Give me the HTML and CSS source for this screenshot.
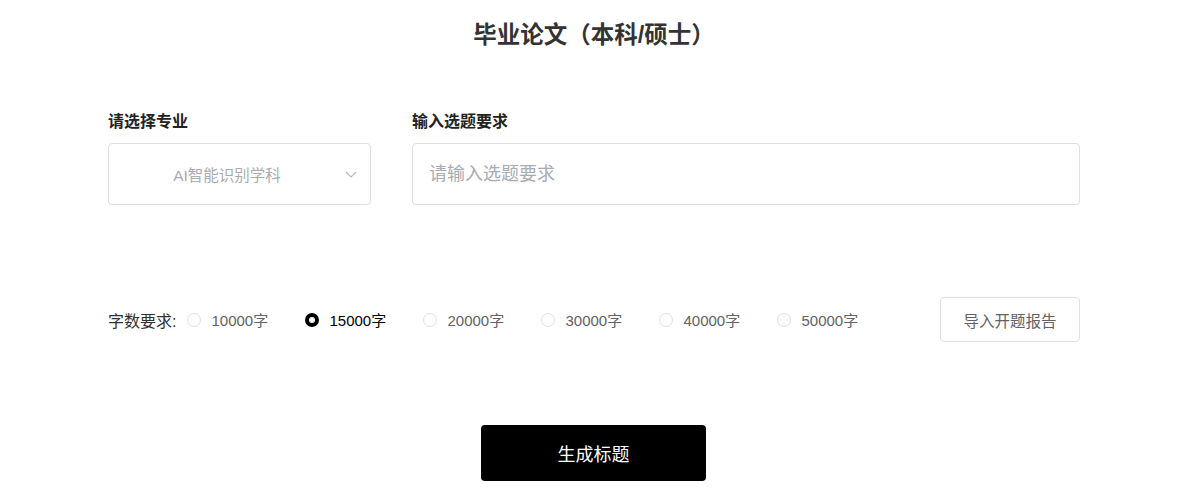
FILE: index.html
```html
<!DOCTYPE html>
<html lang="zh-CN">
<head>
    <meta charset="UTF-8">
    <meta name="viewport" content="width=device-width, initial-scale=1.0">
    <title>毕业论文</title>
    <link rel="stylesheet" href="styles.css">
</head>
<body>
    <div class="container">
        <h2 class="title">毕业论文（本科/硕士）</h2>

        <div class="fields">
            <div class="field field-major">
                <label>请选择专业</label>
                <div class="select-box">
                    <span class="select-text">AI智能识别学科</span>
                    <svg class="arrow" width="12" height="7" viewBox="0 0 12 7">
                        <path d="M1 1 L6 6 L11 1" fill="none" stroke="#b8bac0" stroke-width="1.2"/>
                    </svg>
                </div>
            </div>
            <div class="field field-topic">
                <label>输入选题要求</label>
                <input type="text" class="text-input" placeholder="请输入选题要求">
            </div>
        </div>

        <div class="words-row">
            <div class="radios">
                <span class="radios-label">字数要求:</span>
                <label class="radio"><span class="dot"></span>10000字</label>
                <label class="radio checked"><span class="dot"></span>15000字</label>
                <label class="radio"><span class="dot"></span>20000字</label>
                <label class="radio"><span class="dot"></span>30000字</label>
                <label class="radio"><span class="dot"></span>40000字</label>
                <label class="radio"><span class="dot"></span>50000字</label>
            </div>
            <button class="import-btn">导入开题报告</button>
        </div>

        <div class="submit-wrap">
            <button class="submit-btn">生成标题</button>
        </div>
    </div>
</body>
</html>
```

FILE: styles.css
```css
body { margin: 0; font-family: "Liberation Sans", "Noto Sans CJK SC", sans-serif; color: #303133; background: #fff; }
.container { width: 972px; margin-left: 108px; }
.title { margin: 0; padding-top: 21px; font-size: 23.5px; line-height: 28px; font-weight: bold; text-align: center; color: #333; }

.fields { display: flex; gap: 41px; margin-top: 63px; }
.field { display: flex; flex-direction: column; gap: 11px; }
.field label { font-size: 16px; line-height: 20px; font-weight: bold; color: #222; }
.field-major { width: 263px; }
.field-topic { flex: 1; }

.select-box { height: 62px; box-sizing: border-box; border: 1px solid #dcdfe6; border-radius: 4px; display: flex; align-items: center; padding: 0 13px 0 20px; }
.select-text { flex: 1; text-align: center; font-size: 15.5px; color: #a8abb2; padding-right: 20px; }
.arrow { display: block; }

.text-input { height: 62px; box-sizing: border-box; border: 1px solid #dcdfe6; border-radius: 4px; padding: 0 16px; font-size: 18px; font-family: inherit; outline: none; }
.text-input::placeholder { color: #a8abb2; }

.words-row { display: flex; justify-content: space-between; align-items: center; margin-top: 92px; }
.radios { display: flex; align-items: center; font-size: 15px; }
.radios-label { color: #303133; font-size: 16px; margin-right: 11px; }
.radio { display: flex; align-items: center; gap: 10px; width: 118px; color: #606266; }
.radio .dot { width: 14px; height: 14px; box-sizing: border-box; border: 1px solid #dcdfe6; border-radius: 50%; }
.radio.checked { color: #000; }
.radio.checked .dot { border: 4.5px solid #000; background: #fff; }

.import-btn { width: 140px; height: 45px; border: 1px solid #dcdfe6; border-radius: 4px; background: #fff; font-size: 15.5px; color: #606266; font-family: inherit; cursor: pointer; }

.submit-wrap { display: flex; margin-top: 83px; padding-left: 373px; }
.submit-btn { width: 225px; height: 56px; border: none; border-radius: 4px; background: #000; color: #fff; font-size: 18px; font-family: inherit; cursor: pointer; }
```
